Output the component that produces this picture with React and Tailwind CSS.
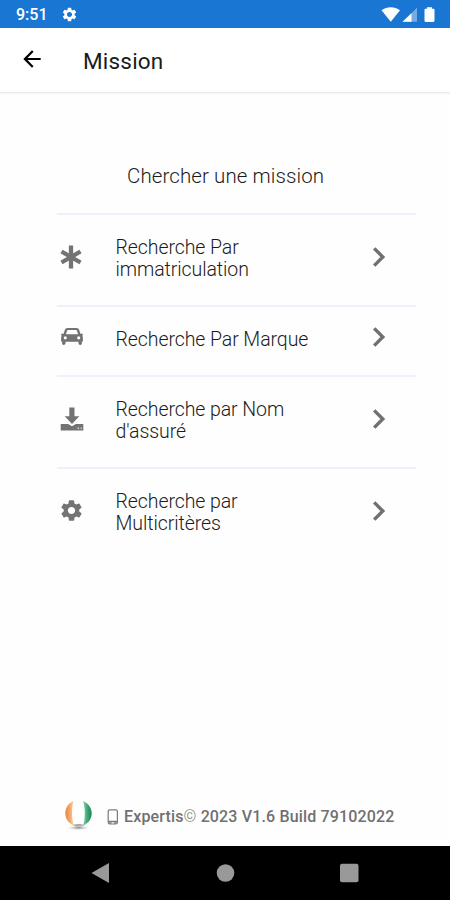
import { MdArrowBack, MdSettings } from 'react-icons/md';
import { IoMdSettings } from 'react-icons/io';

const AsteriskIcon = () => (
  <svg viewBox="0 0 24 24" className="w-6 h-6 mr-[2px]" fill="none" stroke="currentColor" strokeWidth="4.300">
    <path d="M12 .5v23M2.500 6.500l19 11M21.500 6.500l-19 11" />
  </svg>
);

const CarIcon = () => (
  <svg viewBox="0 0 22 17" className="w-[22px] h-[17px]" fill="currentColor">
    <path
      fillRule="evenodd"
      d="M6.500 0h9c1.300 0 2.200.7 2.600 1.800l1.100 3.200.4.800h2.200v1.700h-.7c.5.6.8 1.300.8 2.100v3.800h-1V15.300c0 1-.6 1.700-1.600 1.700s-1.800-.7-1.800-1.700v-1.500h-13v1.500c0 1-.8 1.700-1.800 1.700S1.100 16.300 1.100 15.300v-1.900h-1V9.600c0-.8.300-1.500.8-2.100H.2V5.800h2.200l.4-.8 1.100-3.200C4.300.7 5.200 0 6.500 0ZM6.900 2c-.4 0-.7.200-.8.600L5 6.200h12l-1.100-3.600c-.1-.4-.4-.6-.8-.6H6.900ZM4.300 8.200a1.600 1.600 0 1 0 0 3.200 1.600 1.600 0 0 0 0-3.200Zm13.400 0a1.600 1.600 0 1 0 0 3.200 1.600 1.600 0 0 0 0-3.200Z"
    />
  </svg>
);

const DownloadIcon = () => (
  <svg viewBox="0 0 24 24" className="w-6 h-6" fill="currentColor">
    <path d="M9.300.5h5.200v8.800h4.800L12 17 4.700 9.300h4.600V.5Z" />
    <path
      fillRule="evenodd"
      d="M.7 17h7.500l3.800 2.200 3.800-2.200h7.500v6.500H.7V17Zm17 3.500v1.300H19v-1.300h-1.300Zm3 0v1.300h1v-1.300h-1Z"
    />
  </svg>
);

const ChevronIcon = () => (
  <svg viewBox="0 0 14 20" className="w-[14px] h-5" fill="none" stroke="currentColor" strokeWidth="3.400">
    <path d="m2.200 1.400 8.600 8.600-8.600 8.600" />
  </svg>
);

const FlagBall = () => (
  <svg viewBox="0 0 30 34" className="w-[30px] h-[34px]">
    <defs>
      <radialGradient id="shadow">
        <stop offset="0" stopColor="#777" />
        <stop offset="1" stopColor="#fff" stopOpacity="0" />
      </radialGradient>
      <linearGradient id="orange">
        <stop offset="0" stopColor="#e08a45" />
        <stop offset=".5" stopColor="#f7a560" />
        <stop offset="1" stopColor="#fbd3a8" />
      </linearGradient>
      <linearGradient id="green">
        <stop offset="0" stopColor="#8fd0b0" />
        <stop offset=".5" stopColor="#3fa878" />
        <stop offset="1" stopColor="#168657" />
      </linearGradient>
    </defs>
    <ellipse cx="14.500" cy="29.800" rx="13" ry="2.700" fill="url(#shadow)" />
    <circle cx="14.500" cy="15.300" r="13" fill="#fff" />
    <path d="M9.500 3C4.500 5 1.300 9.800 1.300 15.300s3.300 10.200 8.700 12.400C7.600 21.500 7.400 9.500 9.500 3Z" fill="url(#orange)" />
    <path d="M19 3c5 2 8.700 6.800 8.700 12.300S24.400 25.500 19 27.700c2.400-6.200 2.400-18.200 0-24.700Z" fill="url(#green)" />
    <path d="M8.500 27c4 2 8 2 12 0-4-1.200-8-1.200-12 0Z" fill="#aaaaa2" />
  </svg>
);

const PhoneIcon = () => (
  <svg viewBox="0 0 12 16" className="w-3 h-4" fill="none" stroke="#7c7c7c">
    <rect x="1.200" y=".8" width="9.200" height="14.200" rx="1.500" strokeWidth="1.200" />
    <path d="M1.200 12.500h9.200" strokeWidth="1.500" />
    <path d="M2 14h2.500M7 14h2.500" strokeWidth="1.500" />
  </svg>
);

const items = [
  { icon: <AsteriskIcon />, lines: ['Recherche Par', 'immatriculation'], height: 'h-[92px]', pad: 'pb-[7px]' },
  { icon: <CarIcon />, lines: ['Recherche Par Marque'], height: 'h-[70px]', pad: 'pb-[9px]' },
  { icon: <DownloadIcon />, lines: ['Recherche par Nom', "d'assuré"], height: 'h-[92px]', pad: 'pb-[7px]' },
  { icon: <IoMdSettings size={25} />, lines: ['Recherche par', 'Multicritères'], height: 'h-[92px]', pad: 'pb-[7px]' },
];

const App = () => {
  return (
    <div className="flex flex-col w-[450px] h-[900px] bg-[#fefefe] font-['Roboto',sans-serif] text-[#1b1b1b]">
      {/* Status bar */}
      <div className="flex items-center h-7 pl-4 pr-[15px] bg-[#1976d2] text-white">
        <span className="w-[45px] pt-[2px] text-[16px] font-medium">9:51</span>
        <MdSettings size={17} />
        <svg viewBox="0 0 54 17" className="w-[54px] h-[17px] ml-auto" fill="currentColor">
          <path d="M.5 4.300C6 .3 13.500.3 19 4.300L9.800 15.700.5 4.300Z" />
          <path d="M36 1.800v14H21.500l14.500-14Z" opacity=".4" />
          <path d="M30.500 7.200v8.600h-9l9-8.600Z" />
          <path d="M46 1.200h5v1.500h1.300c.7 0 1.200.5 1.200 1.200v10.900c0 .7-.5 1.200-1.200 1.200h-7.600c-.7 0-1.200-.5-1.200-1.200V3.900c0-.7.500-1.200 1.200-1.200H46V1.200Z" />
        </svg>
      </div>

      {/* Header */}
      <header className="flex items-center h-[65px] pl-[19px] bg-white border-b border-[#e9e9e9] shadow-[0_1px_2px_rgba(0,0,0,0.04)]">
        <MdArrowBack size={26} className="mb-[2px] text-black" />
        <h1 className="ml-[38px] pt-[3px] text-[22.500px] font-[450] tracking-[0.200px]">Mission</h1>
      </header>

      <main className="flex-1 pl-[57px] pr-[34px] pt-[65px]">
        <h2 className="h-[55px] pl-[70px] pt-[3px] text-[20.500px] leading-[30px] tracking-[0.090px] font-[330] whitespace-nowrap">
          Chercher une mission
        </h2>
        {items.map((item) => (
          <div key={item.lines.join(' ')} className={`flex items-center border-t-2 border-[#f0f0fc] ${item.height}`}>
            <div className={`flex justify-center w-[29px] text-[#737373] ${item.pad}`}>{item.icon}</div>
            <div className="flex-1 pl-[29.500px] pb-[2px] text-[19.500px] leading-[22.500px] tracking-[-0.080px] font-[330] whitespace-nowrap">
              {item.lines.map((line) => (
                <p key={line}>{line}</p>
              ))}
            </div>
            <div className={`mr-[30px] text-[#707070] ${item.pad}`}>
              <ChevronIcon />
            </div>
          </div>
        ))}
      </main>

      <footer className="flex items-center h-[62px] pl-[64px] text-[#707070]">
        <FlagBall />
        <div className="flex items-center ml-[13px] pt-[4px]">
          <PhoneIcon />
          <span className="ml-[5px] text-[16px] font-medium tracking-[0.150px] whitespace-nowrap">
            Expertis<span className="font-light">©</span> 2023 V1.6 Build 79102022
          </span>
        </div>
      </footer>

      {/* Android navigation */}
      <nav className="flex items-center h-[54px] pl-[91px] bg-black">
        <svg viewBox="0 0 268 20" className="w-[268px] h-5" fill="#999">
          <path d="M18 0v20L.5 10 18 0Z" />
          <circle cx="134.500" cy="10" r="8.800" />
          <rect x="249" y=".8" width="18.500" height="18.500" rx="2" />
        </svg>
      </nav>
    </div>
  );
};

export default App;
